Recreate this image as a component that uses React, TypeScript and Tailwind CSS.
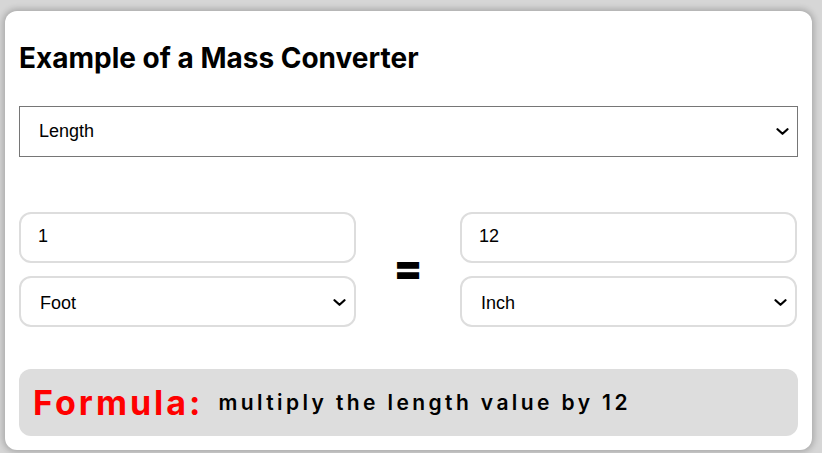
import React, { useState } from "react";

const units = ["Foot", "Inch", "Yard", "Meter", "Centimeter"];

const Chevron = ({ className }: { className: string }) => (
  <svg
    className={className}
    width="13"
    height="7"
    viewBox="0 0 13 7"
    fill="none"
    stroke="black"
    strokeWidth="2.2"
    strokeLinecap="round"
    strokeLinejoin="round"
  >
    <polyline points="1.5,1.2 6.5,5.8 11.5,1.2" />
  </svg>
);

const UnitSelect = ({ value }: { value: string }) => (
  <div className="relative">
    <select
      defaultValue={value}
      className="h-[51px] w-full appearance-none rounded-[12px] border-2 border-[#dddddd] bg-white pt-[3px] pl-[19px] pr-[30px] text-[18px] text-black outline-none"
    >
      {units.map((u) => (
        <option key={u}>{u}</option>
      ))}
    </select>
    <Chevron className="pointer-events-none absolute right-[10px] top-[23px]" />
  </div>
);

export default function App() {
  const [from, setFrom] = useState("1");

  return (
    <div className="min-h-screen w-full bg-[#d6d6d6] pt-[11px] pl-[5px] pr-[10px] pb-[2px]">
      <div
        className="flex w-[807px] flex-col rounded-[12px] bg-white px-[14px] pt-[29px] pb-[14px] shadow-[0_0_6px_2px_rgba(0,0,0,0.22)]"
        style={{ fontFamily: '"Liberation Sans", Arial, sans-serif' }}
      >
        <h1
          className="h-[36px] text-[28px] font-bold leading-[36px] text-black"
          style={{ fontFamily: 'Inter, "Noto Sans", sans-serif' }}
        >
          Example of a Mass Converter
        </h1>

        <div className="relative mt-[30px]">
          <select
            defaultValue="Length"
            className="h-[51px] w-full appearance-none border border-[#767676] bg-white pl-[19px] pr-[30px] text-[18px] text-black outline-none"
          >
            <option>Length</option>
            <option>Mass</option>
            <option>Volume</option>
          </select>
          <Chevron className="pointer-events-none absolute right-[9px] top-[22px]" />
        </div>

        <div className="mt-[55px] grid grid-cols-[337px_104px_337px] items-center">
          <div className="flex flex-col gap-[13px]">
            <input
              value={from}
              onChange={(e) => setFrom(e.target.value)}
              className="h-[51px] w-full rounded-[12px] border-2 border-[#dddddd] bg-white px-[17px] pb-[3px] text-[18px] text-black outline-none"
            />
            <UnitSelect value="Foot" />
          </div>

          <div
            className="pb-[3px] text-center text-[42px] font-black leading-none text-black"
            style={{ fontFamily: "Inter, sans-serif" }}
          >
            =
          </div>

          <div className="flex flex-col gap-[13px]">
            <input
              readOnly
              value={String(Number(from) * 12 || 0)}
              className="h-[51px] w-full rounded-[12px] border-2 border-[#dddddd] bg-white px-[17px] pb-[3px] text-[18px] text-black outline-none"
            />
            <UnitSelect value="Inch" />
          </div>
        </div>

        <div
          className="mt-[42px] flex h-[67px] items-center gap-[15px] rounded-[12px] bg-[#dddddd] px-[14px]"
          style={{ fontFamily: 'Inter, "Noto Sans", sans-serif' }}
        >
          <span className="text-[34px] font-bold tracking-[3px] text-[#ff0000]">Formula:</span>
          <span className="text-[21px] font-semibold tracking-[3.4px] text-black">
            multiply the length value by 12
          </span>
        </div>
      </div>
    </div>
  );
}
